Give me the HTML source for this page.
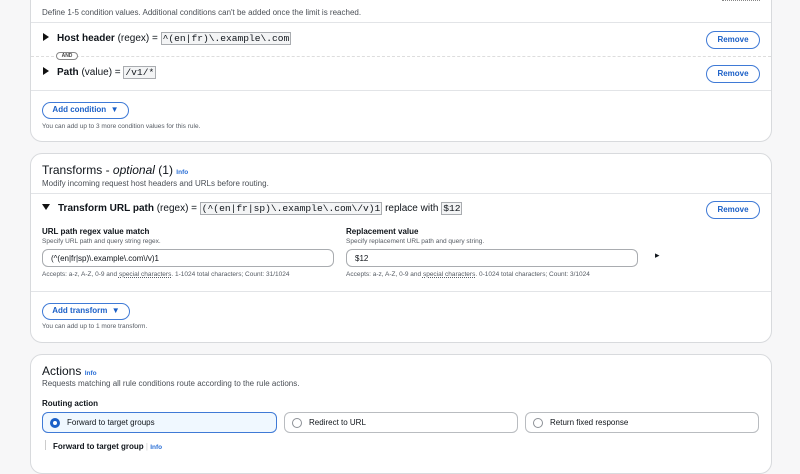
<!DOCTYPE html>
<html><head><meta charset="utf-8"><style>
*{box-sizing:border-box;margin:0;padding:0}
body{width:800px;height:450px;overflow:hidden;background:#f7f7f8;font-family:"Liberation Sans",sans-serif;color:#0f141a;position:relative}
.a{position:absolute;white-space:nowrap}
.card{position:absolute;left:30px;width:742px;background:#fff;border:1px solid #d8dadd;border-radius:12px}
.hl{position:absolute;left:31px;width:740px;height:1px;background:#e2e4e7}
.s{font-size:8px;color:#4a4f56}
.xs{font-size:6.5px;color:#555b63}
.t{font-size:10px;font-weight:bold}
.n{font-weight:normal}
.code{font-family:"Liberation Mono",monospace;font-weight:normal;border:1px solid #a9acb0;background:#f3f4f5;padding:0 1px;font-size:9.6px}
.btn{position:absolute;border:1.5px solid #3f7ad6;border-radius:10px;color:#1a5fc7;font-size:8px;font-weight:bold;text-align:center;background:#fff}
.tri{display:inline-block;width:0;height:0;border-top:4px solid transparent;border-bottom:4px solid transparent;border-left:6px solid #111;margin-right:8px;vertical-align:0}
.trd{display:inline-block;width:0;height:0;border-left:4px solid transparent;border-right:4px solid transparent;border-top:6px solid #111;margin-right:8px;vertical-align:1px}
.inp{position:absolute;height:18px;border:1px solid #a9acb0;border-radius:6px;font-size:8px;padding:4px 8px;background:#fff}
.info{color:#2a6fd6;font-size:6.5px;font-weight:bold}
.tile{position:absolute;top:412px;height:21px;border:1px solid #b9bcc0;border-radius:6px;font-size:8px;padding:5px 0 0 24px;background:#fff}
.rad{position:absolute;left:7px;top:5px;width:10px;height:10px;border:1px solid #8c9096;border-radius:50%}
</style></head><body>
<div class="card" style="top:-20px;height:162px"></div>
<div class="a s" style="left:42px;top:8px">Define 1-5 condition values. Additional conditions can't be added once the limit is reached.</div>
<div class="a" style="left:722px;top:0;width:38px;border-top:1px dotted #888"></div>
<div class="hl" style="top:22px"></div>
<div class="a t" style="left:43px;top:33px"><span class="tri"></span>Host header <span class="n">(regex) =</span> <span class="code">^(en|fr)\.example\.com</span></div>
<div class="btn" style="left:706px;top:31px;width:54px;height:18px;line-height:15px">Remove</div>
<div class="a" style="left:31px;top:56px;width:740px;border-top:1px dashed #ddd"></div>
<div class="a" style="left:56px;top:52px;width:22px;height:8px;border:1px solid #888;border-radius:5px;background:#fff;font-size:5px;font-weight:bold;text-align:center;line-height:6px;color:#444">AND</div>
<div class="a t" style="left:43px;top:67px"><span class="tri"></span>Path <span class="n">(value) =</span> <span class="code">/v1/*</span></div>
<div class="btn" style="left:706px;top:65px;width:54px;height:18px;line-height:15px">Remove</div>
<div class="hl" style="top:90px"></div>
<div class="btn" style="left:42px;top:102px;width:87px;height:17px;line-height:14px">Add condition &nbsp;▼</div>
<div class="a xs" style="left:42px;top:123px">You can add up to 3 more condition values for this rule.</div>

<div class="card" style="top:153px;height:190px"></div>
<div class="a" style="left:42px;top:163px;font-size:12px">Transforms - <i>optional</i> (1) <span class="info">Info</span></div>
<div class="a s" style="left:42px;top:179px">Modify incoming request host headers and URLs before routing.</div>
<div class="hl" style="top:193px"></div>
<div class="a t" style="left:42px;top:203px"><span class="trd"></span>Transform URL path <span class="n">(regex) =</span> <span class="code">(^(en|fr|sp)\.example\.com\/v)1</span> <span class="n">replace with</span> <span class="code">$12</span></div>
<div class="btn" style="left:706px;top:201px;width:54px;height:18px;line-height:15px">Remove</div>
<div class="a" style="left:42px;top:227px;font-size:8px;font-weight:bold">URL path regex value match</div>
<div class="a xs" style="left:42px;top:238px">Specify URL path and query string regex.</div>
<div class="inp" style="left:42px;top:249px;width:292px">(^(en|fr|sp)\.example\.com\/v)1</div>
<div class="a xs" style="left:42px;top:271px">Accepts: a-z, A-Z, 0-9 and <u style="text-decoration-style:dotted">special characters</u>. 1-1024 total characters; Count: 31/1024</div>
<div class="a" style="left:346px;top:227px;font-size:8px;font-weight:bold">Replacement value</div>
<div class="a xs" style="left:346px;top:238px">Specify replacement URL path and query string.</div>
<div class="inp" style="left:346px;top:249px;width:292px">$12</div>
<div class="a xs" style="left:346px;top:271px">Accepts: a-z, A-Z, 0-9 and <u style="text-decoration-style:dotted">special characters</u>. 0-1024 total characters; Count: 3/1024</div>
<div class="a" style="left:655px;top:250px;font-size:9px">▸</div>
<div class="hl" style="top:291px"></div>
<div class="btn" style="left:42px;top:303px;width:88px;height:17px;line-height:14px">Add transform &nbsp;▼</div>
<div class="a xs" style="left:42px;top:323px">You can add up to 1 more transform.</div>

<div class="card" style="top:354px;height:120px"></div>
<div class="a" style="left:42px;top:364px;font-size:12px">Actions <span class="info">Info</span></div>
<div class="a s" style="left:42px;top:379px">Requests matching all rule conditions route according to the rule actions.</div>
<div class="a" style="left:42px;top:399px;font-size:8px;font-weight:bold">Routing action</div>
<div class="tile" style="left:42px;width:235px;border:1.5px solid #3f7ad6;background:#f0f8ff"><div class="rad" style="border:3px solid #1a5fc7;background:#fff"></div>Forward to target groups</div>
<div class="tile" style="left:284px;width:234px"><div class="rad"></div>Redirect to URL</div>
<div class="tile" style="left:525px;width:234px"><div class="rad"></div>Return fixed response</div>
<div class="a" style="left:45px;top:440px;width:1px;height:10px;background:#ccc"></div>
<div class="a" style="left:53px;top:442px;font-size:8px;font-weight:bold">Forward to target group <span style="color:#ccc;font-weight:normal">|</span> <span class="info">Info</span></div>
</body></html>
